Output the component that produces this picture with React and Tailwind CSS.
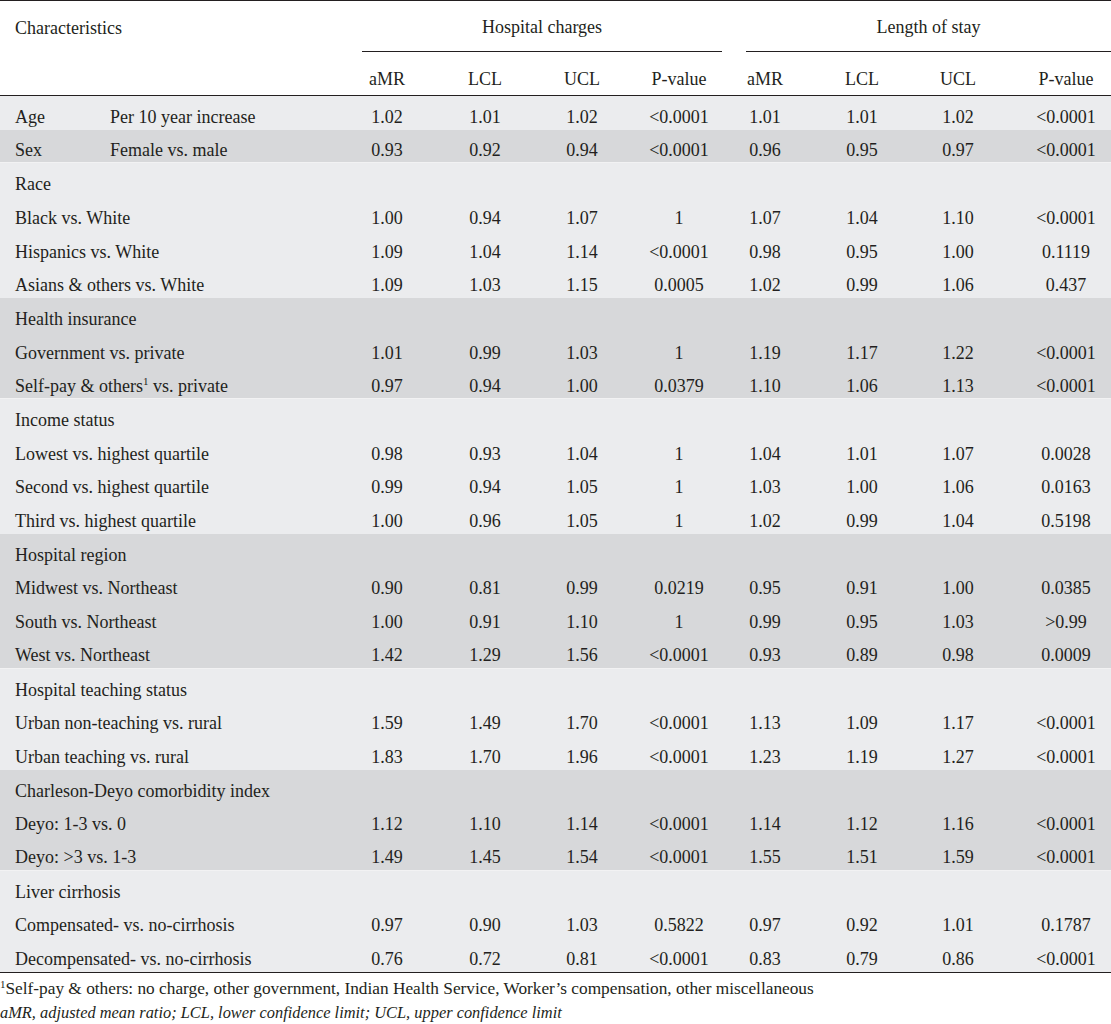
// value cells are 80px wide, each shifted so its centre sits where the print has it
const offsets = ['ml-[0px]', 'ml-[18px]', 'ml-[17px]', 'ml-[17px]', 'ml-[6px]', 'ml-[17px]', 'ml-[16px]', 'ml-[28px]'];

const data = [
  { label: 'Age', sub: 'Per 10 year increase', v: ['1.02', '1.01', '1.02', '<0.0001', '1.01', '1.01', '1.02', '<0.0001'], tone: 'light' },
  { label: 'Sex', sub: 'Female vs. male', v: ['0.93', '0.92', '0.94', '<0.0001', '0.96', '0.95', '0.97', '<0.0001'], tone: 'dark' },
  {
    group: 'Race',
    tone: 'light',
    items: [
      ['Black vs. White', '1.00', '0.94', '1.07', '1', '1.07', '1.04', '1.10', '<0.0001'],
      ['Hispanics vs. White', '1.09', '1.04', '1.14', '<0.0001', '0.98', '0.95', '1.00', '0.1119'],
      ['Asians & others vs. White', '1.09', '1.03', '1.15', '0.0005', '1.02', '0.99', '1.06', '0.437'],
    ],
  },
  {
    group: 'Health insurance',
    tone: 'dark',
    items: [
      ['Government vs. private', '1.01', '0.99', '1.03', '1', '1.19', '1.17', '1.22', '<0.0001'],
      ['SELFPAY', '0.97', '0.94', '1.00', '0.0379', '1.10', '1.06', '1.13', '<0.0001'],
    ],
  },
  {
    group: 'Income status',
    tone: 'light',
    items: [
      ['Lowest vs. highest quartile', '0.98', '0.93', '1.04', '1', '1.04', '1.01', '1.07', '0.0028'],
      ['Second vs. highest quartile', '0.99', '0.94', '1.05', '1', '1.03', '1.00', '1.06', '0.0163'],
      ['Third vs. highest quartile', '1.00', '0.96', '1.05', '1', '1.02', '0.99', '1.04', '0.5198'],
    ],
  },
  {
    group: 'Hospital region',
    tone: 'dark',
    items: [
      ['Midwest vs. Northeast', '0.90', '0.81', '0.99', '0.0219', '0.95', '0.91', '1.00', '0.0385'],
      ['South vs. Northeast', '1.00', '0.91', '1.10', '1', '0.99', '0.95', '1.03', '>0.99'],
      ['West vs. Northeast', '1.42', '1.29', '1.56', '<0.0001', '0.93', '0.89', '0.98', '0.0009'],
    ],
  },
  {
    group: 'Hospital teaching status',
    tone: 'light',
    items: [
      ['Urban non-teaching vs. rural', '1.59', '1.49', '1.70', '<0.0001', '1.13', '1.09', '1.17', '<0.0001'],
      ['Urban teaching vs. rural', '1.83', '1.70', '1.96', '<0.0001', '1.23', '1.19', '1.27', '<0.0001'],
    ],
  },
  {
    group: 'Charleson-Deyo comorbidity index',
    tone: 'dark',
    items: [
      ['Deyo: 1-3 vs. 0', '1.12', '1.10', '1.14', '<0.0001', '1.14', '1.12', '1.16', '<0.0001'],
      ['Deyo: >3 vs. 1-3', '1.49', '1.45', '1.54', '<0.0001', '1.55', '1.51', '1.59', '<0.0001'],
    ],
  },
  {
    group: 'Liver cirrhosis',
    tone: 'light',
    items: [
      ['Compensated- vs. no-cirrhosis', '0.97', '0.90', '1.03', '0.5822', '0.97', '0.92', '1.01', '0.1787'],
      ['Decompensated- vs. no-cirrhosis', '0.76', '0.72', '0.81', '<0.0001', '0.83', '0.79', '0.86', '<0.0001'],
    ],
  },
];

const toneClass = (tone) => (tone === 'dark' ? 'bg-[#d7d8da]' : 'bg-[#ebecee]');

const Cells = ({ values }) =>
  values.map((v, i) => (
    <div key={i} className={`w-[80px] shrink-0 text-center ${offsets[i]}`}>
      {v}
    </div>
  ));

const Row = ({ tone, children, values = [], last }) => (
  <div
    className={`flex h-[33.7px] items-center pt-[8px] ${toneClass(tone)} ${
      last && tone === 'dark' ? 'border-b border-[#f2f2f3]' : ''
    }`}
  >
    <div className="w-[347px] shrink-0 pl-[15px] flex">{children}</div>
    <Cells values={values} />
  </div>
);

const label = (text) =>
  text === 'SELFPAY' ? (
    <span>
      Self-pay &amp; others<sup className="text-[11px] top-[-0.6em]">1</sup> vs. private
    </span>
  ) : (
    text
  );

export default function App() {
  return (
    <div className="w-[1111px] overflow-hidden bg-white text-[#231f20] text-[18px] leading-none font-['Liberation_Serif',serif]">
      {/* header */}
      <div className="border-t-[1.5px] border-[#231f20]">
        <div className="grid grid-cols-[347px_387px_377px] h-[51px]">
          <div className="pl-[15px] pt-[18px]">Characteristics</div>
          <div className="ml-[15px] mr-[12px] border-b border-[#231f20] flex items-center justify-center pt-[2px]">
            Hospital charges
          </div>
          <div className="ml-[12px] border-b border-[#231f20] flex items-center justify-center pt-[2px]">
            Length of stay
          </div>
        </div>
        <div className="flex h-[44px] items-center pt-[11px] border-b-[1.5px] border-[#231f20]">
          <div className="w-[347px] shrink-0" />
          <Cells values={['aMR', 'LCL', 'UCL', 'P-value', 'aMR', 'LCL', 'UCL', 'P-value']} />
        </div>
      </div>

      {/* body */}
      <div className="border-b-[1.5px] border-[#231f20]">
        {data.map((row, idx) =>
          row.group ? (
            <div key={idx}>
              <Row tone={row.tone}>{row.group}</Row>
              {row.items.map((it, j) => (
                <Row key={j} tone={row.tone} values={it.slice(1)} last={j === row.items.length - 1}>
                  {label(it[0])}
                </Row>
              ))}
            </div>
          ) : (
            <Row key={idx} tone={row.tone} values={row.v} last>
              <span className="w-[95px]">{row.label}</span>
              <span>{row.sub}</span>
            </Row>
          )
        )}
      </div>

      {/* footnotes */}
      <div className="pt-[4px] leading-[24px]">
        <div className="text-[17.3px]">
          <sup className="text-[11px] top-[-0.5em]">1</sup>Self-pay &amp; others: no charge, other government, Indian Health
          Service, Worker’s compensation, other miscellaneous
        </div>
        <div className="italic text-[16.4px]">
          aMR, adjusted mean ratio; LCL, lower confidence limit; UCL, upper confidence limit
        </div>
      </div>
    </div>
  );
}
